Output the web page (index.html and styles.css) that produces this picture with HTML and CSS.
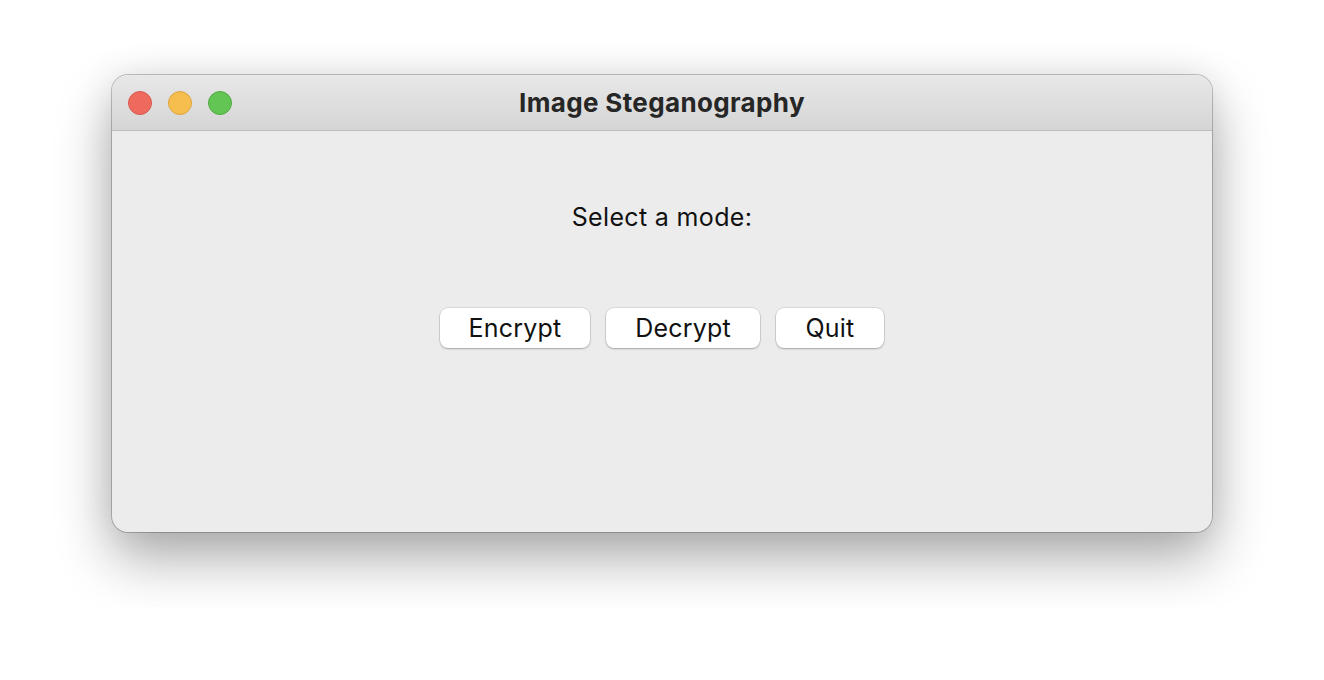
FILE: index.html
```html
<!DOCTYPE html>
<html>
<head>
<meta charset="utf-8">
<link rel="stylesheet" href="styles.css">
</head>
<body>
<div class="page">
  <div class="window">
    <div class="titlebar">
      <div class="lights">
        <span class="light red"></span>
        <span class="light yellow"></span>
        <span class="light green"></span>
      </div>
      <div class="title">Image Steganography</div>
    </div>
    <div class="content">
      <div class="label">Select a mode:</div>
      <div class="buttons">
        <button class="btn btn-encrypt">Encrypt</button>
        <button class="btn btn-decrypt">Decrypt</button>
        <button class="btn btn-quit">Quit</button>
      </div>
    </div>
  </div>
</div>
</body>
</html>
```
FILE: styles.css
```css
html, body {
  margin: 0;
  padding: 0;
  background: #ffffff;
}
.page {
  padding: 75px 112px;
  font-family: Inter, "Liberation Sans", sans-serif;
}
.window {
  width: 1100px;
  height: 457px;
  box-sizing: border-box;
  border-radius: 16px;
  background: #ececec;
  box-shadow: 0 0 0 1px rgba(0,0,0,0.22), 0 26px 56px rgba(0,0,0,0.33), 0 0 36px rgba(0,0,0,0.08);
  overflow: hidden;
  display: flex;
  flex-direction: column;
}
.titlebar {
  position: relative;
  height: 55px;
  flex: none;
  background: linear-gradient(#e8e8e8, #d5d5d5);
  border-bottom: 1px solid #bdbdbd;
  display: flex;
  align-items: center;
  justify-content: center;
}
.lights {
  position: absolute;
  left: 16px;
  top: 16px;
  display: flex;
  gap: 16px;
}
.light {
  width: 24px;
  height: 24px;
  border-radius: 50%;
  box-sizing: border-box;
}
.red { background: #ee6a5f; border: 1px solid #d8574d; }
.yellow { background: #f5be4f; border: 1px solid #dca33e; }
.green { background: #62c554; border: 1px solid #50a941; }
.title {
  font-size: 26px;
  font-weight: 700;
  color: #262626;
  letter-spacing: 0.35px;
}
.content {
  flex: 1;
  display: flex;
  flex-direction: column;
  align-items: center;
  padding-top: 71px;
}
.label {
  font-size: 25px;
  color: #111;
  line-height: 30px;
  letter-spacing: 0.35px;
}
.buttons {
  display: flex;
  gap: 16px;
  margin-top: 76px;
}
.btn {
  height: 40px;
  background: #ffffff;
  border: none;
  border-radius: 8px;
  box-shadow: 0 0 0 0.5px rgba(0,0,0,0.15), 0 1px 2px rgba(0,0,0,0.25);
  font-family: Inter, "Liberation Sans", sans-serif;
  font-size: 25px;
  letter-spacing: 0.2px;
  color: #111;
  padding: 0;
}
.btn-encrypt { width: 150px; }
.btn-decrypt { width: 154px; }
.btn-quit { width: 108px; }
```
